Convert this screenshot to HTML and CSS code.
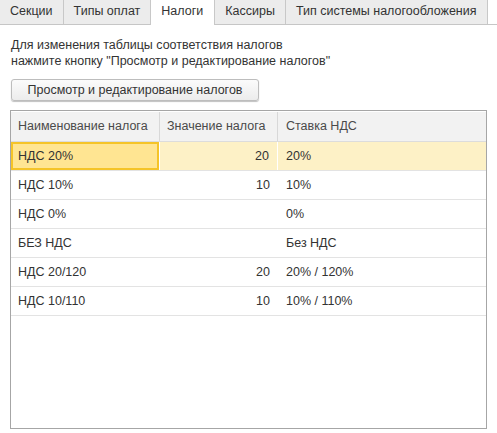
FILE: index.html
```html
<!DOCTYPE html>
<html lang="ru">
<head>
<meta charset="utf-8">
<link rel="stylesheet" href="styles.css">
</head>
<body>
<div class="tabs">
  <div class="tab">Секции</div>
  <div class="tab">Типы оплат</div>
  <div class="tab active">Налоги</div>
  <div class="tab">Кассиры</div>
  <div class="tab">Тип системы налогообложения</div>
</div>
<div class="content">
  <p class="hint">Для изменения таблицы соответствия налогов<br>нажмите кнопку "Просмотр и редактирование налогов"</p>
  <button class="btn">Просмотр и редактирование налогов</button>
  <div class="grid">
    <div class="row head">
      <div class="cell c1">Наименование налога</div>
      <div class="cell c2">Значение налога</div>
      <div class="cell c3">Ставка НДС</div>
    </div>
    <div class="row selected">
      <div class="cell c1 focus">НДС 20%</div>
      <div class="cell c2 num">20</div>
      <div class="cell c3">20%</div>
    </div>
    <div class="row">
      <div class="cell c1">НДС 10%</div>
      <div class="cell c2 num">10</div>
      <div class="cell c3">10%</div>
    </div>
    <div class="row">
      <div class="cell c1">НДС 0%</div>
      <div class="cell c2 num"></div>
      <div class="cell c3">0%</div>
    </div>
    <div class="row">
      <div class="cell c1">БЕЗ НДС</div>
      <div class="cell c2 num"></div>
      <div class="cell c3">Без НДС</div>
    </div>
    <div class="row">
      <div class="cell c1">НДС 20/120</div>
      <div class="cell c2 num">20</div>
      <div class="cell c3">20% / 120%</div>
    </div>
    <div class="row">
      <div class="cell c1">НДС 10/110</div>
      <div class="cell c2 num">10</div>
      <div class="cell c3">10% / 110%</div>
    </div>
  </div>
</div>
</body>
</html>
```
FILE: styles.css
```css
* { box-sizing: border-box; }
html, body { margin: 0; padding: 0; background: #fff; }
body {
  font-family: "Liberation Sans", Arial, sans-serif;
  font-size: 12.5px;
  color: #333;
  width: 497px;
  height: 433px;
  overflow: hidden;
}
.tabs {
  display: flex;
  height: 25px;
  border-bottom: 1px solid #c6c6c6;
}
.tab {
  height: 24px;
  line-height: 23px;
  padding: 0 10px;
  background: #ececec;
  border-right: 1px solid #c8c8c8;
  color: #333;
  white-space: nowrap;
}
.tab.active {
  background: #fff;
  height: 25px;
  margin-left: -1px;
  border-left: 1px solid #c8c8c8;
  padding: 0 11px 0 10px;
}
.content {
  padding: 0 10px 0 10px;
}
.hint {
  margin: 12px 0 0 1px;
  line-height: 16px;
  color: #333;
}
.btn {
  display: block;
  margin: 10px 0 0 1px;
  width: 248px;
  height: 22px;
  padding: 0;
  font-family: inherit;
  font-size: 12.5px;
  color: #333;
  background: linear-gradient(#fbfbfb, #ececec);
  border: 1px solid #bdbdbd;
  border-radius: 3px;
  box-shadow: 0 1px 1px rgba(0,0,0,0.25);
}
.grid {
  margin-top: 9px;
  width: 477px;
  height: 319px;
  border: 1px solid #a6a6a6;
}
.row {
  display: grid;
  grid-template-columns: 149px 118px 1fr;
  height: 29px;
  border-bottom: 1px solid #e3e3e3;
}
.row.head {
  height: 31px;
  background: #f2f2f2;
  border-bottom: 1px solid #dcdcdc;
  color: #4a4a4a;
  border-top: 1px solid #fff;
}
.row.head .cell { border-right: 1px solid #d8d8d8; }
.row.head .cell.c3 { border-right: 0; }
.cell {
  padding: 0 7px;
  line-height: 28px;
  white-space: nowrap;
}
.num { text-align: right; padding-right: 8px; }
.c3 { padding-left: 8px; }
.row.selected { background: #fdf1c6; }
.row.selected .cell.c1 { border-right: 1px solid #fff; }
.row.selected .cell.c2 { border-right: 1px solid #fff; }
.focus {
  background: #ffe592;
  box-shadow: inset 0 0 0 2px #f5c428;
}
```
